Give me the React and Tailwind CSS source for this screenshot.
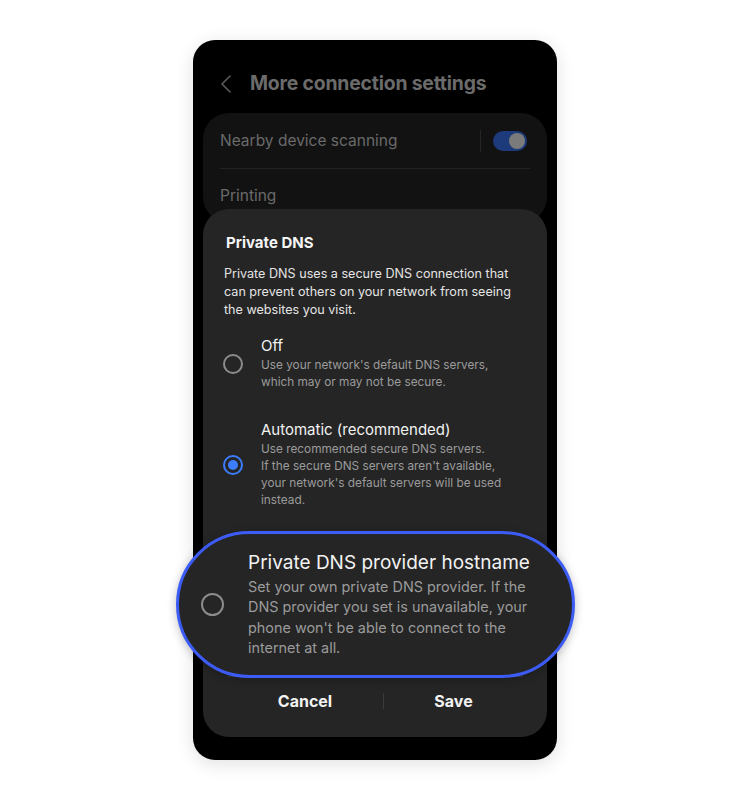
import React from 'react';

function Radio({ checked, size = 'sm' }) {
  if (size === 'lg') {
    return <div className="w-[23px] h-[23px] rounded-full border-2 border-[#8c8c8c] shrink-0" />;
  }
  if (checked) {
    return (
      <div className="w-[20px] h-[20px] rounded-full border-2 border-[#3b7dfb] flex items-center justify-center shrink-0">
        <div className="w-[10px] h-[10px] rounded-full bg-[#3b7dfb]" />
      </div>
    );
  }
  return <div className="w-[20px] h-[20px] rounded-full border-2 border-[#8c8c8c] shrink-0" />;
}

function Option({ title, lines, checked }) {
  return (
    <div className="flex items-center pl-[20px]">
      <Radio checked={checked} />
      <div className="ml-[18px]">
        <p className="text-[15px] leading-[20px] text-[#f2f2f2]">{title}</p>
        <p className="mt-[1px] text-[11.8px] leading-[17px] text-[#9b9b9b]">
          {lines.map((l, i) => (
            <React.Fragment key={i}>
              {l}
              {i < lines.length - 1 && <br />}
            </React.Fragment>
          ))}
        </p>
      </div>
    </div>
  );
}

export default function App() {
  return (
    <div className="min-h-[800px] bg-white pt-[40px] font-['Inter',sans-serif]">
      <div className="relative mx-auto w-[364px] h-[720px] rounded-[22px] bg-black pt-[24px] shadow-[0_4px_18px_rgba(0,0,0,0.12)]">
        {/* Header */}
        <div className="flex items-center h-[40px] pl-[26px]">
          <svg width="14" height="20" viewBox="0 0 14 20" fill="none">
            <path d="M11 2 L3 10 L11 18" stroke="#5c5c5c" strokeWidth="1.6" strokeLinecap="round" strokeLinejoin="round" />
          </svg>
          <span className="ml-[17px] text-[19.4px] font-bold text-[#6b6b6b] tracking-[-0.2px]">More connection settings</span>
        </div>

        {/* Settings card */}
        <div className="mx-[10px] mt-[9px] rounded-[26px] bg-[#121212]">
          <div className="flex items-center h-[55px] pl-[17px] pr-[20px]">
            <span className="flex-1 text-[15.5px] text-[#6a6a6a]">Nearby device scanning</span>
            <div className="w-px h-[22px] bg-[#262626] mr-[12px]" />
            <div className="w-[34px] h-[20px] rounded-full bg-[#1d3a7a] flex items-center justify-end pr-[2px]">
              <div className="w-[16px] h-[16px] rounded-full bg-[#7b7b7b]" />
            </div>
          </div>
          <div className="mx-[17px] h-px bg-[#222222]" />
          <div className="flex items-center h-[54px] px-[17px]">
            <span className="text-[15.5px] text-[#6a6a6a]">Printing</span>
          </div>
        </div>

        {/* Dialog */}
        <div className="absolute left-[10px] right-[10px] bottom-[23px] rounded-[26px] bg-[#252525] pt-[24px] pb-[12px]">
          <p className="pl-[23px] text-[15px] leading-[20px] font-bold text-[#f5f5f5]">Private DNS</p>
          <p className="mt-[12px] pl-[21px] text-[12.6px] leading-[18px] text-[#e4e4e4]">
            Private DNS uses a secure DNS connection that
            <br />
            can prevent others on your network from seeing
            <br />
            the websites you visit.
          </p>

          <div className="mt-[17px]">
            <Option
              title="Off"
              lines={["Use your network's default DNS servers,", 'which may or may not be secure.']}
            />
          </div>
          <div className="mt-[29px]">
            <Option
              checked
              title="Automatic (recommended)"
              lines={[
                'Use recommended secure DNS servers.',
                "If the secure DNS servers aren't available,",
                "your network's default servers will be used",
                'instead.',
              ]}
            />
          </div>

          {/* Highlighted option */}
          <div className="relative z-10 mt-[22px] -ml-[27px] -mr-[28px] h-[147px] rounded-full border-[3px] border-[#3d5cf5] bg-[#252525] shadow-[0_2px_10px_rgba(0,0,0,0.25)] flex items-center pl-[22px]">
            <Radio size="lg" />
            <div className="ml-[24px]">
              <p className="text-[19px] leading-[24px] text-[#f2f2f2]">Private DNS provider hostname</p>
              <p className="mt-[2px] text-[14.4px] leading-[20.5px] text-[#9b9b9b]">
                Set your own private DNS provider. If the
                <br />
                DNS provider you set is unavailable, your
                <br />
                phone won't be able to connect to the
                <br />
                internet at all.
              </p>
            </div>
          </div>
          <div className="mx-[24px] -mt-[2px] h-px bg-[#3a3a3a]" />

          {/* Buttons */}
          <div className="flex items-center mx-[24px] py-[12px]">
            <div className="w-[156px] text-center text-[16px] leading-[24px] font-bold text-[#f2f2f2]">Cancel</div>
            <div className="w-px h-[16px] bg-[#3c3c3c]" />
            <div className="flex-1 text-center text-[16px] leading-[24px] font-bold text-[#f2f2f2]">Save</div>
          </div>
        </div>
      </div>
    </div>
  );
}
